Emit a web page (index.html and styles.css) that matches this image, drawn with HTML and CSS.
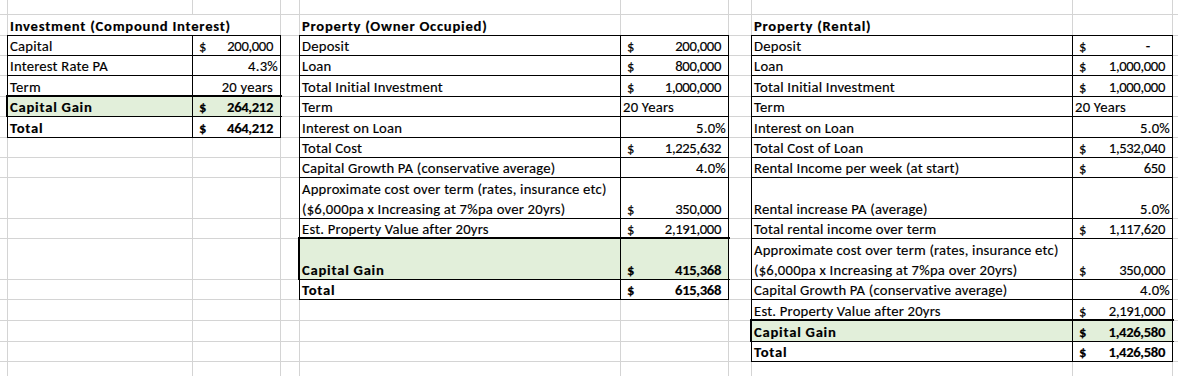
FILE: index.html
```html
<!DOCTYPE html>
<html lang="en">
<head>
<meta charset="utf-8">
<title>Investment comparison</title>
<link rel="stylesheet" href="styles.css">
</head>
<body>
<div class="sheet">
  <!-- row 1 -->
  <div class="c"></div><div class="c"></div><div class="c"></div><div class="c"></div><div class="c"></div><div class="c"></div><div class="c"></div><div class="c"></div><div class="c"></div><div class="c"></div>
  <!-- row 2 -->
  <div class="c"></div>
  <div class="c span2 l t"><span>Investment (Compound Interest)</span></div>
  <div class="c"></div>
  <div class="c l t"><span>Property (Owner Occupied)</span></div>
  <div class="c"></div><div class="c"></div>
  <div class="c l t"><span>Property (Rental)</span></div>
  <div class="c"></div><div class="c"></div>
  <!-- row 3 -->
  <div class="c"></div>
  <div class="c b l"><span>Capital</span></div>
  <div class="c b m"><span>$</span><span class="v">200,000</span></div>
  <div class="c"></div>
  <div class="c b l"><span>Deposit</span></div>
  <div class="c b m"><span>$</span><span class="v">200,000</span></div>
  <div class="c"></div>
  <div class="c b l"><span>Deposit</span></div>
  <div class="c b m dash"><span>$</span><span class="v">-</span></div>
  <div class="c"></div>
  <!-- row 4 -->
  <div class="c"></div>
  <div class="c b l"><span>Interest Rate PA</span></div>
  <div class="c b p"><span>4.3%</span></div>
  <div class="c"></div>
  <div class="c b l"><span>Loan</span></div>
  <div class="c b m"><span>$</span><span class="v">800,000</span></div>
  <div class="c"></div>
  <div class="c b l"><span>Loan</span></div>
  <div class="c b m"><span>$</span><span class="v">1,000,000</span></div>
  <div class="c"></div>
  <!-- row 5 -->
  <div class="c"></div>
  <div class="c b l"><span>Term</span></div>
  <div class="c b r"><span>20 years</span></div>
  <div class="c"></div>
  <div class="c b l"><span>Total Initial Investment</span></div>
  <div class="c b m"><span>$</span><span class="v">1,000,000</span></div>
  <div class="c"></div>
  <div class="c b l"><span>Total Initial Investment</span></div>
  <div class="c b m"><span>$</span><span class="v">1,000,000</span></div>
  <div class="c"></div>
  <!-- row 6 -->
  <div class="c"></div>
  <div class="g g-inv">
    <div class="c l t"><span>Capital Gain</span></div>
    <div class="c m t"><span>$</span><span class="v">264,212</span></div>
  </div>
  <div class="c"></div>
  <div class="c b l"><span>Term</span></div>
  <div class="c b l"><span>20 Years</span></div>
  <div class="c"></div>
  <div class="c b l"><span>Term</span></div>
  <div class="c b l"><span>20 Years</span></div>
  <div class="c"></div>
  <!-- row 7 -->
  <div class="c"></div>
  <div class="c b l t"><span>Total</span></div>
  <div class="c b m t"><span>$</span><span class="v">464,212</span></div>
  <div class="c"></div>
  <div class="c b l"><span>Interest on Loan</span></div>
  <div class="c b p"><span>5.0%</span></div>
  <div class="c"></div>
  <div class="c b l"><span>Interest on Loan</span></div>
  <div class="c b p"><span>5.0%</span></div>
  <div class="c"></div>
  <!-- row 8 -->
  <div class="c"></div><div class="c"></div><div class="c"></div><div class="c"></div>
  <div class="c b l"><span>Total Cost</span></div>
  <div class="c b m"><span>$</span><span class="v">1,225,632</span></div>
  <div class="c"></div>
  <div class="c b l"><span>Total Cost of Loan</span></div>
  <div class="c b m"><span>$</span><span class="v">1,532,040</span></div>
  <div class="c"></div>
  <!-- row 9 -->
  <div class="c"></div><div class="c"></div><div class="c"></div><div class="c"></div>
  <div class="c b l"><span>Capital Growth PA (conservative average)</span></div>
  <div class="c b p"><span>4.0%</span></div>
  <div class="c"></div>
  <div class="c b l"><span>Rental Income per week (at start)</span></div>
  <div class="c b m"><span>$</span><span class="v">650</span></div>
  <div class="c"></div>
  <!-- row 10 -->
  <div class="c"></div><div class="c"></div><div class="c"></div><div class="c"></div>
  <div class="c b l"><span>Approximate cost over term (rates, insurance etc)<br>($6,000pa x Increasing at 7%pa over 20yrs)</span></div>
  <div class="c b m"><span>$</span><span class="v">350,000</span></div>
  <div class="c"></div>
  <div class="c b l"><span>Rental increase PA (average)</span></div>
  <div class="c b p"><span>5.0%</span></div>
  <div class="c"></div>
  <!-- row 11 -->
  <div class="c"></div><div class="c"></div><div class="c"></div><div class="c"></div>
  <div class="c b l"><span>Est. Property Value after 20yrs</span></div>
  <div class="c b m"><span>$</span><span class="v">2,191,000</span></div>
  <div class="c"></div>
  <div class="c b l"><span>Total rental income over term</span></div>
  <div class="c b m"><span>$</span><span class="v">1,117,620</span></div>
  <div class="c"></div>
  <!-- row 12 -->
  <div class="c"></div><div class="c"></div><div class="c"></div><div class="c"></div>
  <div class="g g-prop">
    <div class="c l t"><span>Capital Gain</span></div>
    <div class="c m t"><span>$</span><span class="v">415,368</span></div>
  </div>
  <div class="c"></div>
  <div class="c b l"><span>Approximate cost over term (rates, insurance etc)<br>($6,000pa x Increasing at 7%pa over 20yrs)</span></div>
  <div class="c b m"><span>$</span><span class="v">350,000</span></div>
  <div class="c"></div>
  <!-- row 13 -->
  <div class="c"></div><div class="c"></div><div class="c"></div><div class="c"></div>
  <div class="c b l t"><span>Total</span></div>
  <div class="c b m t"><span>$</span><span class="v">615,368</span></div>
  <div class="c"></div>
  <div class="c b l"><span>Capital Growth PA (conservative average)</span></div>
  <div class="c b p"><span>4.0%</span></div>
  <div class="c"></div>
  <!-- row 14 -->
  <div class="c"></div><div class="c"></div><div class="c"></div><div class="c"></div><div class="c"></div><div class="c"></div><div class="c"></div>
  <div class="c b l"><span>Est. Property Value after 20yrs</span></div>
  <div class="c b m"><span>$</span><span class="v">2,191,000</span></div>
  <div class="c"></div>
  <!-- row 15 -->
  <div class="c"></div><div class="c"></div><div class="c"></div><div class="c"></div><div class="c"></div><div class="c"></div><div class="c"></div>
  <div class="g g-rent">
    <div class="c l t"><span>Capital Gain</span></div>
    <div class="c m t"><span>$</span><span class="v">1,426,580</span></div>
  </div>
  <div class="c"></div>
  <!-- row 16 -->
  <div class="c"></div><div class="c"></div><div class="c"></div><div class="c"></div><div class="c"></div><div class="c"></div><div class="c"></div>
  <div class="c b l t"><span>Total</span></div>
  <div class="c b m t"><span>$</span><span class="v">1,426,580</span></div>
  <div class="c"></div>
  <!-- row 17 -->
  <div class="c"></div><div class="c"></div><div class="c"></div><div class="c"></div><div class="c"></div><div class="c"></div><div class="c"></div><div class="c"></div><div class="c"></div><div class="c"></div>
</div>
</body>
</html>
```
FILE: styles.css
```css
html, body {
  margin: 0;
  padding: 0;
  background: #ffffff;
  overflow: hidden;
}

.sheet {
  width: 1178px;
  height: 376px;
  display: grid;
  grid-template-columns: 7px 184px 87px 18px 320px 107px 22px 320px 99px 1fr;
  grid-template-rows: 14px 20px 19px 19px 20px 19px 20px 19px 19px 40px 19px 40px 19px 20px 20px 19px 1fr;
  gap: 1px;
  background: #d4d4d4;
  font-family: Carlito, Calibri, Lato, "Liberation Sans", sans-serif;
  font-size: 14.667px;
  letter-spacing: 0.22px;
  color: #000000;
  -webkit-text-stroke: 0.15px #000000;
  overflow: hidden;
}

.c {
  background: #ffffff;
  display: flex;
  align-items: flex-end;
  min-width: 0;
  white-space: nowrap;
}

.c > span {
  line-height: 20px;
  margin-bottom: -1px;
}

.span2 { grid-column: span 2; }

/* alignments */
.l { padding-left: 2px; }
.r { justify-content: flex-end; padding-right: 7px; }
.p { justify-content: flex-end; padding-right: 2px; }
.m { justify-content: space-between; padding-left: 6px; padding-right: 7px; }
.m.dash { padding-right: 22px; }

.v { letter-spacing: -0.35px; }

/* bold */
.t { font-weight: 700; letter-spacing: 0.75px; }
.t .v { letter-spacing: -0.35px; }

/* thin table borders */
.b { outline: 1px solid #000000; }

/* highlighted capital-gain rows: thick outline, green fill */
.g {
  grid-column: span 2;
  display: grid;
  gap: 1px;
  background: #000000;
  outline: 2px solid #000000;
}
.g > .c { background: #e2efda; }
.g-inv { grid-template-columns: 184px 87px; }
.g-prop { grid-template-columns: 320px 107px; }
.g-rent { grid-template-columns: 320px 99px; }
```
